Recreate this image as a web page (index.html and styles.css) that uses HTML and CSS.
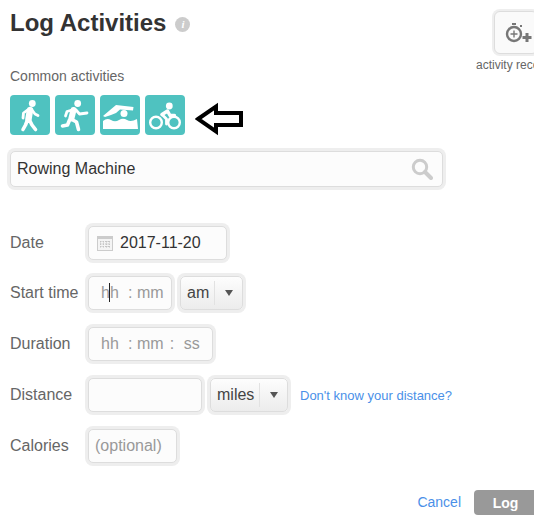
FILE: index.html
```html
<!DOCTYPE html>
<html lang="en">
<head>
  <meta charset="UTF-8">
  <title>Log Activities</title>
  <link rel="stylesheet" href="styles.css">
</head>
<body>
  <div class="page">
    <header class="top">
      <div class="heading">
        <h1>Log Activities</h1>
        <span class="info">i</span>
      </div>
      <div class="recorder">
        <div class="recorder-tile">
          <svg width="32" height="24" viewBox="0 0 32 24">
            <circle cx="12" cy="13" r="7" fill="none" stroke="#777" stroke-width="2.400"/>
            <rect x="10" y="2" width="4" height="2" fill="#777"/>
            <rect x="18" y="4" width="2" height="2" fill="#777"/>
            <path d="M12 9.500v7M8.500 13h7" stroke="#777" stroke-width="1.400"/>
            <path d="M25 12v9M20.500 16.500h9" stroke="#777" stroke-width="3"/>
          </svg>
        </div>
        <div class="recorder-label">activity recorder</div>
      </div>
    </header>

    <!-- Common activities -->
    <div class="common-label">Common activities</div>
    <div class="common-row">
      <div class="tile">
        <svg width="40" height="40" viewBox="0 0 40 40" fill="none" stroke="#fff" stroke-linecap="round" stroke-linejoin="round">
          <circle cx="22.300" cy="8.500" r="3.400" fill="#fff" stroke="none"/>
          <path d="M20 15 L18.500 24" stroke-width="6.500"/>
          <path d="M17.500 15 L13.500 18 L13 23 M22 15 L25 19 L28 20.500" stroke-width="2.800"/>
          <path d="M17.500 25 L15.500 30 L13 34.500 M19.500 25 L22 30 L25.500 34.500" stroke-width="3.600"/>
        </svg>
      </div>
      <div class="tile">
        <svg width="40" height="40" viewBox="0 0 40 40" fill="none" stroke="#fff" stroke-linecap="round" stroke-linejoin="round">
          <circle cx="22.700" cy="8.500" r="3.400" fill="#fff" stroke="none"/>
          <path d="M18.500 15 L16.500 23" stroke-width="6"/>
          <path d="M17 15 L12 16.500 L10.500 21 M21 15 L24.500 19 L32 18" stroke-width="2.800"/>
          <path d="M16 24 L21.500 27 L23.500 34.500 M14.500 25 L12.500 30 L7.500 31" stroke-width="3.600"/>
        </svg>
      </div>
      <div class="tile">
        <svg width="40" height="40" viewBox="0 0 40 40" fill="#fff">
          <circle cx="24" cy="18.500" r="3.500"/>
          <path d="M3 21 L16 10 L33.500 12 L33 15.500 L20 14.500 L16 18 L11 20 L5 22 Z"/>
          <path d="M3 26 Q7 22.500 11 25 T19 25 T27 25 T37 24 L38 34 L3 34 Z"/>
        </svg>
      </div>
      <div class="tile">
        <svg width="40" height="40" viewBox="0 0 40 40" fill="none" stroke="#fff" stroke-linecap="round" stroke-linejoin="round">
          <circle cx="24.300" cy="11" r="3.400" fill="#fff" stroke="none"/>
          <circle cx="11" cy="27.500" r="5.800" stroke-width="2.400"/>
          <circle cx="29" cy="27.500" r="5.800" stroke-width="2.400"/>
          <path d="M17 19.500 L22.500 16 L25 20.500 L29.500 20.500" stroke-width="3.400"/>
          <path d="M17 19.500 L21.500 24 L21.500 29" stroke-width="2.800"/>
        </svg>
      </div>
      <svg class="arrow" width="50" height="34" viewBox="0 0 50 34">
        <path d="M3 17 L21 4.500 V11 H46 V23 H21 V29.500 Z" fill="#fff" stroke="#000" stroke-width="4"/>
      </svg>
    </div>

    <div class="search box">
      <span>Rowing Machine</span>
      <svg width="22" height="22" viewBox="0 0 22 22" fill="none" stroke="#ccc">
        <circle cx="9" cy="9" r="6.700" stroke-width="3"/>
        <path d="M14 14 L20 20" stroke-width="4" stroke-linecap="round"/>
      </svg>
    </div>

    <!-- Form rows -->
    <div class="form">
      <div class="row row-date">
        <label>Date</label>
        <div class="box date">
          <svg width="16" height="16" viewBox="0 0 16 16">
            <rect x="0.500" y="1.500" width="15" height="14" fill="#f4f4f4" stroke="#ccc"/>
            <rect x="0" y="1" width="16" height="3" fill="#ccc"/>
            <path d="M3 6.500h10M3 9h10M3 11.500h10M3.500 6v7M6.500 6v7M9.500 6v7M12.500 6v7" stroke="#c4c4c4" stroke-dasharray="1.500 1"/>
          </svg>
          <span>2017-11-20</span>
        </div>
      </div>

      <div class="row">
        <label>Start time</label>
        <div class="box time start-time">
          <span class="hh">h<i class="cursor"></i>h</span>
          <span class="colon">:</span>
          <span>mm</span>
        </div>
        <div class="box select select-am">
          <span class="select-text">am</span>
          <span class="caret"></span>
        </div>
      </div>

      <div class="row">
        <label>Duration</label>
        <div class="box time duration">
          <span class="hh">hh</span>
          <span class="colon">:</span>
          <span>mm</span>
          <span class="colon-2">:</span>
          <span class="ss">ss</span>
        </div>
      </div>

      <div class="row">
        <label>Distance</label>
        <div class="box distance"></div>
        <div class="box select select-miles">
          <span class="select-text">miles</span>
          <span class="caret"></span>
        </div>
        <a class="link distance-link" href="#">Don't know your distance?</a>
      </div>

      <div class="row">
        <label>Calories</label>
        <div class="box calories">(optional)</div>
      </div>
    </div>

    <div class="actions">
      <a class="link cancel" href="#">Cancel</a>
      <button class="log">Log</button>
    </div>
  </div>
</body>
</html>
```

FILE: styles.css
```css
html, body {
  margin: 0;
  padding: 0;
  height: 526px;
  overflow: hidden;
  background-color: #fff;
}
body {
  font-family: "Liberation Sans", Arial, sans-serif;
  color: #666;
}
.page {
  width: 534px;
  padding-left: 10px;
  box-sizing: border-box;
}
.top {
  display: flex;
  justify-content: space-between;
  height: 66px;
  padding-top: 9px;
  box-sizing: border-box;
}
.heading {
  display: flex;
  align-items: center;
  gap: 9px;
  height: 28px;
}
h1 {
  margin: 0;
  font-size: 24px;
  line-height: 28px;
  color: #333;
}
.info {
  width: 15px;
  height: 15px;
  margin-top: 2px;
  border-radius: 50%;
  background-color: #ccc;
  color: #fff;
  font: italic bold 11px/15px "Liberation Serif", serif;
  text-align: center;
}
.recorder {
  width: 58px;
  margin-top: 2px;
  flex-shrink: 0;
  white-space: nowrap;
}
.recorder-tile {
  width: 42px;
  height: 41px;
  margin-left: 18px;
  border: 1px solid #ddd;
  border-radius: 6px;
  box-shadow: 0 0 0 2px #eee;
  background-color: #fafafa;
  display: flex;
  align-items: center;
  justify-content: center;
}
.recorder-tile svg {
  margin-left: 3px;
  flex-shrink: 0;
}
.recorder-label {
  margin-top: 4px;
  font-size: 12px;
  line-height: 14px;
}
.common-label {
  font-size: 14px;
  line-height: 20px;
}
.common-row {
  display: flex;
  gap: 5px;
  margin-top: 9px;
}
.tile {
  width: 40px;
  height: 40px;
  border-radius: 4px;
  background-color: #4fc2c0;
}
.arrow {
  margin: 7px 0 0 5px;
}
.box {
  height: 34px;
  border: 1px solid #ddd;
  border-radius: 5px;
  box-shadow: 0 0 0 3px #eee;
  background-color: #fcfcfc;
  box-sizing: border-box;
  display: flex;
  align-items: center;
  font-size: 16px;
}
.search {
  width: 433px;
  height: 36px;
  margin-top: 15px;
  padding: 0 9px 0 6px;
  justify-content: space-between;
  color: #333;
}
.form {
  margin-top: 39px;
  display: flex;
  flex-direction: column;
  gap: 17px;
}
.row {
  display: flex;
  align-items: center;
  height: 34px;
}
.row-date {
  margin-bottom: -1px;
}
label {
  width: 78px;
  font-size: 16px;
  flex-shrink: 0;
}
.date {
  width: 139px;
  padding-left: 8px;
  gap: 7px;
  color: #333;
}
.time {
  padding-left: 12px;
  color: #999;
}
.start-time {
  width: 84px;
}
.duration {
  width: 125px;
}
.hh {
  position: relative;
  width: 27px;
}
.cursor {
  position: absolute;
  left: 8px;
  top: -1px;
  width: 1px;
  height: 19px;
  background-color: #222;
}
.colon {
  width: 9px;
}
.colon-2 {
  width: 14px;
  margin-left: 6px;
}
.select {
  margin-left: 8px;
  padding-left: 6px;
  background: linear-gradient(#fdfdfd, #ececec);
  color: #444;
}
.select-am {
  width: 63px;
}
.select-miles {
  width: 78px;
}
.select-text {
  padding-right: 5px;
  border-right: 1px solid #e2e2e2;
  line-height: 24px;
}
.caret {
  margin-left: 10px;
  border-left: 4px solid transparent;
  border-right: 4px solid transparent;
  border-top: 6px solid #555;
}
.distance {
  width: 114px;
}
.distance-link {
  margin-left: 12px;
  font-size: 13px;
}
.calories {
  width: 89px;
  padding-left: 6px;
  color: #999;
}
.link {
  color: #4a90e8;
  text-decoration: none;
}
.actions {
  display: flex;
  justify-content: flex-end;
  align-items: center;
  gap: 13px;
  margin-top: 27px;
  margin-right: -10px;
}
.cancel {
  font-size: 14px;
  margin-bottom: 1px;
}
.log {
  width: 70px;
  height: 25px;
  padding: 0 7px 0 0;
  border: none;
  border-radius: 4px;
  background-color: #999;
  color: #fff;
  font: bold 14px "Liberation Sans", Arial, sans-serif;
}
```
